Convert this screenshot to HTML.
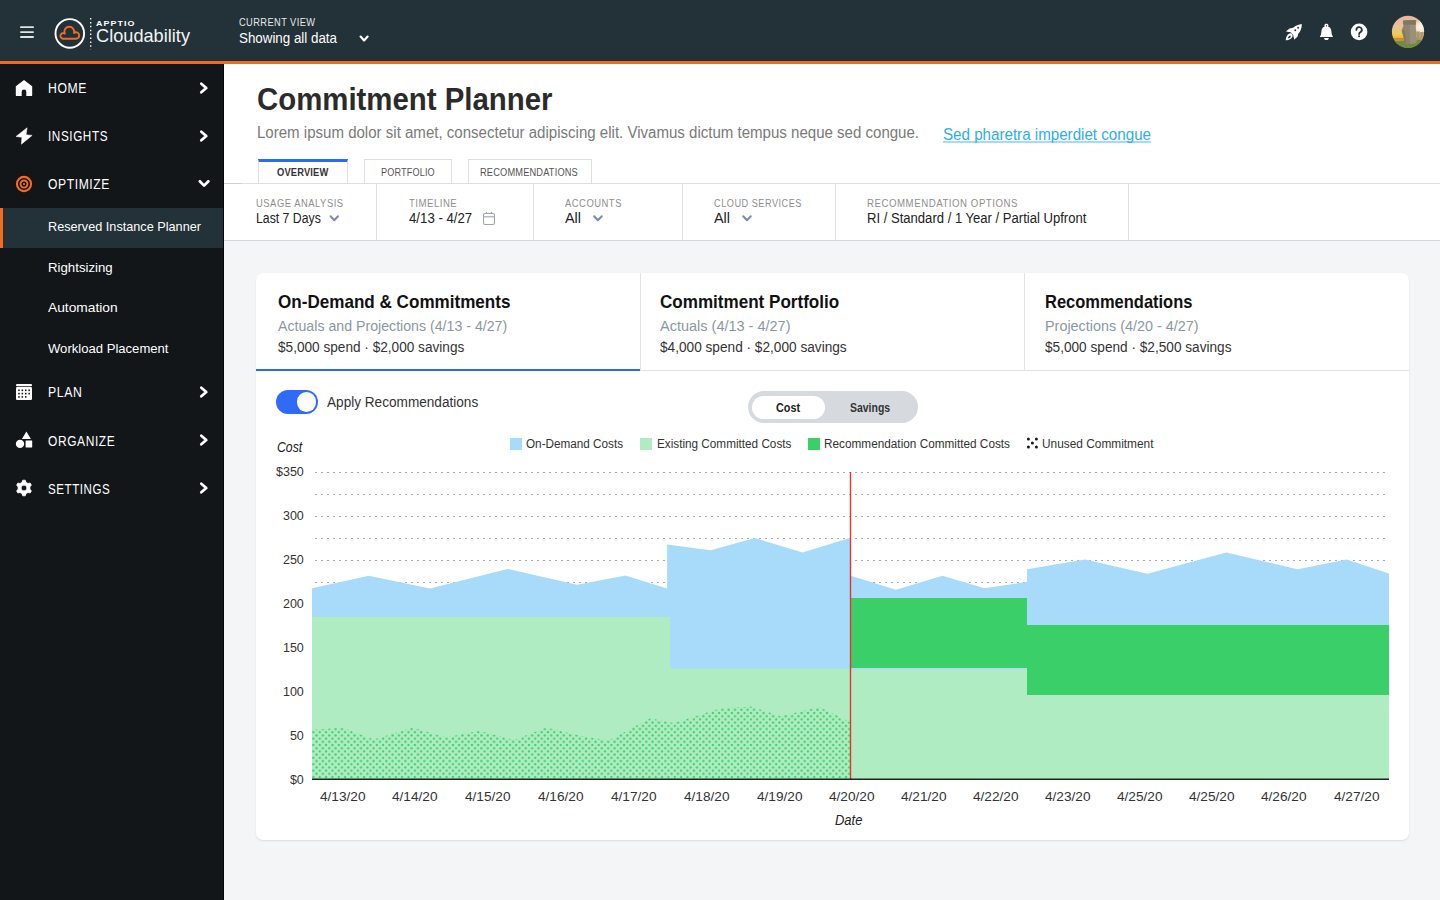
<!DOCTYPE html>
<html><head><meta charset="utf-8"><title>Commitment Planner</title>
<style>
*{box-sizing:border-box;margin:0;padding:0}
html,body{width:1440px;height:900px;overflow:hidden;background:#f4f5f7;font-family:"Liberation Sans",sans-serif;position:relative}
.abs{position:absolute}
.t{position:absolute;white-space:nowrap;line-height:1;transform-origin:0 0}
#top{position:absolute;left:0;top:0;width:1440px;height:61px;background:#233138}
#orange{position:absolute;left:0;top:61px;width:1440px;height:3px;background:#f26b21}
#side{position:absolute;left:0;top:64px;width:224px;height:836px;background:#121619}
#active{position:absolute;left:0;top:208px;width:224px;height:40px;background:#233138;border-left:3px solid #f26b21}
#hdr{position:absolute;left:224px;top:64px;width:1216px;height:177px;background:#fff;border-bottom:1px solid #d3d7db}
#fline{position:absolute;left:224px;top:183px;width:1216px;height:1px;background:#dcdfe3}
.vd{position:absolute;top:184px;width:1px;height:56px;background:#dcdfe3}
.tab{position:absolute;top:159px;height:25px;background:#fff;border:1px solid #dcdfe3;border-bottom:none}
#card{position:absolute;left:256px;top:273px;width:1153px;height:567px;background:#fff;border-radius:7px;box-shadow:0 1px 2px rgba(0,0,0,0.10)}
</style></head><body>
<div id="top"></div>
<div id="orange"></div>
<div id="side"></div>
<div id="active"></div>
<div id="hdr"></div>
<div class="tab" style="left:258px;width:90px;border-top:3px solid #2a6af5"></div>
<div class="tab" style="left:364px;width:88px"></div>
<div class="tab" style="left:468px;width:124px"></div>
<div id="fline"></div>
<div class="abs" style="left:224px;top:183px;width:18px;height:1px;background:#cdd1d5"></div>
<div class="abs" style="left:223px;top:64px;width:1px;height:836px;background:#060809"></div>
<div class="vd" style="left:376px"></div>
<div class="vd" style="left:533px"></div>
<div class="vd" style="left:682px"></div>
<div class="vd" style="left:835px"></div>
<div class="vd" style="left:1128px"></div>
<svg class="abs" style="left:0;top:0" width="1440" height="260" viewBox="0 0 1440 260">
<g fill="none" stroke="#7c8ca6" stroke-width="2" stroke-linecap="round" stroke-linejoin="round">
<polyline points="330.6,216.2 334.3,220.2 338,216.2"/>
<polyline points="594.1,216.2 597.9,220.2 601.7,216.2"/>
<polyline points="743.2,216.2 747,220.2 750.8,216.2"/>
</g>
<g fill="none" stroke="#9ea6ae" stroke-width="1.1">
<rect x="483.5" y="213.5" width="11" height="11" rx="1.5"/>
<line x1="483.5" y1="216.8" x2="494.5" y2="216.8"/>
<line x1="486.5" y1="211.8" x2="486.5" y2="214"/><line x1="491.5" y1="211.8" x2="491.5" y2="214"/>
</g>
</svg>
<div class="abs" style="left:943px;top:141.2px;width:208px;height:1.4px;background:#a3dcf6"></div>
<div id="card"></div>
<div class="abs" style="left:256px;top:370px;width:1153px;height:1px;background:#e0e3e7"></div>
<div class="abs" style="left:640px;top:273px;width:1px;height:97px;background:#e0e3e7"></div>
<div class="abs" style="left:1024px;top:273px;width:1px;height:97px;background:#e0e3e7"></div>
<div class="abs" style="left:256px;top:369px;width:384px;height:2px;background:#2a6af5"></div>
<div class="abs" style="left:276px;top:390px;width:42px;height:24px;border-radius:12px;background:#2f6bf7"></div>
<div class="abs" style="left:296.8px;top:392.2px;width:19.6px;height:19.6px;border-radius:50%;background:#fff"></div>
<div class="abs" style="left:748px;top:391px;width:170px;height:32px;border-radius:16px;background:#d6dadf"></div>
<div class="abs" style="left:752px;top:395.5px;width:73px;height:23.6px;border-radius:12px;background:#fff"></div>
<div class="abs" style="left:510px;top:438px;width:12px;height:12px;background:#a8dbf9"></div>
<div class="abs" style="left:640px;top:438px;width:12px;height:12px;background:#b0ecc2"></div>
<div class="abs" style="left:808px;top:438px;width:12px;height:12px;background:#3acf68"></div>
<svg class="abs" style="left:1026px;top:437px" width="14" height="14" viewBox="0 0 14 14"><g fill="#15191c"><circle cx="2.4" cy="2" r="1.5"/><circle cx="10.4" cy="2" r="1.5"/><circle cx="6.4" cy="6" r="1.5"/><circle cx="2.4" cy="10" r="1.5"/><circle cx="10.4" cy="10" r="1.5"/></g></svg>
<svg class="abs" style="left:0;top:0" width="1440" height="900" viewBox="0 0 1440 900">
<defs><pattern id="dots" patternUnits="userSpaceOnUse" x="313.4" y="738.6" width="6.34" height="6.4">
<rect width="6.34" height="6.4" fill="#b0ecc2"/><circle cx="0" cy="0" r="1.2" fill="#3dd06b"/><circle cx="6.34" cy="0" r="1.2" fill="#3dd06b"/><circle cx="0" cy="6.4" r="1.2" fill="#3dd06b"/><circle cx="6.34" cy="6.4" r="1.2" fill="#3dd06b"/><circle cx="3.17" cy="3.2" r="1.2" fill="#3dd06b"/></pattern></defs>
<g stroke="#a3aab5" stroke-width="1.1" stroke-dasharray="2 4" stroke-dashoffset="3" fill="none"><line x1="312" y1="472.5" x2="1389" y2="472.5"/><line x1="312" y1="494.5" x2="1389" y2="494.5"/><line x1="312" y1="516.5" x2="1389" y2="516.5"/><line x1="312" y1="538.5" x2="1389" y2="538.5"/><line x1="312" y1="560.5" x2="1389" y2="560.5"/><line x1="312" y1="582.5" x2="1389" y2="582.5"/><line x1="312" y1="604.5" x2="1389" y2="604.5"/><line x1="312" y1="626.5" x2="1389" y2="626.5"/><line x1="312" y1="648.5" x2="1389" y2="648.5"/><line x1="312" y1="670.5" x2="1389" y2="670.5"/><line x1="312" y1="692.5" x2="1389" y2="692.5"/><line x1="312" y1="714.5" x2="1389" y2="714.5"/><line x1="312" y1="736.5" x2="1389" y2="736.5"/><line x1="312" y1="758.5" x2="1389" y2="758.5"/></g>
<polygon fill="#a8dbf9" points="312.0,588.3 368.8,575.8 430.0,588.6 507.5,568.9 577.2,584.7 625.4,575.6 667.1,588.6 667.1,544.6 710.7,550.3 754.9,538.0 802.6,552.4 850.3,537.8 850.8,575.8 896.0,589.7 942.5,575.7 984.4,588.2 1027.1,582.0 1027.1,569.2 1085.0,559.4 1147.4,573.8 1226.4,552.6 1297.6,569.3 1346.5,559.4 1389.0,573.5 1389.0,779.0 312.0,779.0"/>
<polygon fill="#b0ecc2" points="312,617 670,617 670,668.6 850.5,668.6 850.5,669.4 1027,669.4 1027,695 1389,695 1389,779 312,779"/>
<polygon fill="#3acf68" points="850.5,598 1027,598 1027,625 1389,625 1389,695 1027,695 1027,668 850.5,668"/>
<polygon fill="url(#dots)" points="312.0,730.0 342.0,727.5 374.0,739.5 412.7,727.5 446.0,737.6 479.0,730.8 514.0,740.0 546.4,727.5 580.0,735.7 609.0,740.6 650.0,718.2 673.4,723.0 720.0,708.5 751.2,706.5 780.4,716.2 819.3,706.9 850.0,722.0 850.0,779.0 312.0,779.0"/>
<line x1="850.5" y1="472" x2="850.5" y2="779" stroke="#e8322f" stroke-width="1.4"/>
<line x1="312" y1="779.2" x2="1389" y2="779.2" stroke="#222" stroke-width="1.4"/>
</svg>
<svg class="abs" style="left:0;top:0" width="1440" height="61" viewBox="0 0 1440 61">
<g fill="#dfe3e6"><rect x="20" y="26.3" width="14" height="1.8" rx="0.9"/><rect x="20" y="31.2" width="14" height="1.8" rx="0.9"/><rect x="20" y="36.1" width="14" height="1.8" rx="0.9"/></g>
<circle cx="69.8" cy="33.4" r="14.3" fill="none" stroke="#fff" stroke-width="1.9"/>
<path d="M63.2,38.7 L76,38.7 A3.2,3.2 0 1 0 74.0,33.0 A4.9,4.9 0 1 0 64.84,33.64 A2.8,2.8 0 1 0 63.2,38.7 Z" fill="none" stroke="#f26b21" stroke-width="1.9" stroke-linejoin="round"/>
<line x1="90.7" y1="18" x2="90.7" y2="49.5" stroke="#fff" stroke-width="1.3" stroke-dasharray="1.5 2.4"/>
<polyline points="360.6,36.6 364.1,40.4 367.6,36.6" fill="none" stroke="#fff" stroke-width="2.2" stroke-linecap="round" stroke-linejoin="round"/>
<g fill="#fff">
<path d="M1301.8,23.9 C1298.6,24.1 1295.6,25.6 1293.2,27.7 L1289.5,28.4 L1285.9,31.6 L1290.6,32.3 L1293.1,34.8 L1294.2,39.8 L1297.6,36.5 L1298.1,34.0 C1300.6,31.4 1301.9,28.0 1301.8,23.9 Z"/>
<path fill-rule="evenodd" d="M1285.7,40.3 C1285.8,37.2 1287.0,34.4 1289.6,33.4 C1291.4,32.9 1292.9,34.2 1292.6,36.0 C1292.2,38.6 1289.2,40.2 1285.7,40.3 Z M1288.0,38.2 C1288.2,36.9 1288.9,35.9 1289.9,35.7 C1290.6,35.6 1290.9,36.2 1290.6,36.9 C1290.2,37.7 1289.2,38.2 1288.0,38.2 Z"/>
<path fill-rule="evenodd" d="M1324.4,27.2 L1324.4,25.5 C1324.4,24.3 1325.3,23.7 1326.4,23.7 C1327.5,23.7 1328.4,24.3 1328.4,25.5 L1328.4,27.2 Z M1326.0,26.4 L1326.8,26.4 L1326.8,25.1 L1326.0,25.1 Z"/>
<path d="M1323.6,26.9 L1329.2,26.9 C1330.6,27.6 1331.2,29.4 1331.4,31.5 L1331.8,34.6 L1333.0,36.9 L1319.8,36.9 L1321.0,34.6 L1321.4,31.5 C1321.6,29.4 1322.2,27.6 1323.6,26.9 Z"/>
<path d="M1323.9,37.9 L1329.0,37.9 L1328.2,39.4 C1327.8,39.9 1327.2,40.1 1326.4,40.1 C1325.6,40.1 1325.0,39.9 1324.7,39.4 Z"/>
<circle cx="1359.1" cy="31.9" r="8.3"/>
</g>
<circle cx="1295.3" cy="30.3" r="0.95" fill="#233138"/><circle cx="1298.1" cy="27.7" r="0.95" fill="#233138"/>
<path d="M1356.4,29.9 A2.7,2.7 0 1 1 1360.3,32.3 Q1359.1,32.9 1359.1,34" fill="none" stroke="#233138" stroke-width="1.8" stroke-linecap="round"/>
<circle cx="1359.1" cy="36.3" r="1.05" fill="#233138"/>
<defs><linearGradient id="sky" x1="0" y1="0" x2="0" y2="1"><stop offset="0" stop-color="#e6b39b"/><stop offset="0.35" stop-color="#ecc49a"/><stop offset="0.58" stop-color="#f0c850"/><stop offset="0.66" stop-color="#eeb62c"/><stop offset="0.68" stop-color="#c98a3e"/><stop offset="0.8" stop-color="#d09a48"/><stop offset="0.84" stop-color="#8c9a45"/><stop offset="1" stop-color="#6d8a30"/></linearGradient>
<radialGradient id="glow" cx="0.5" cy="0.5" r="0.5"><stop offset="0" stop-color="#fffaf2"/><stop offset="0.6" stop-color="#fbeee0" stop-opacity="0.8"/><stop offset="1" stop-color="#f3dcc4" stop-opacity="0"/></radialGradient>
<clipPath id="av"><circle cx="1408" cy="31.8" r="16.1"/></clipPath></defs>
<g clip-path="url(#av)">
<rect x="1390" y="14" width="36" height="36" fill="url(#sky)"/>
<ellipse cx="1421" cy="27" rx="8" ry="8" fill="url(#glow)"/>
<path d="M1389,41.5 L1400,41 L1416,40.5 L1426,38.5 L1426,50 L1389,50 Z" fill="#728c3c"/>
<rect x="1416.3" y="31.5" width="3.4" height="8.5" fill="#a69678"/>
<rect x="1420.2" y="32" width="3.4" height="8" fill="#b09a78"/>
<path d="M1403.2,20.6 L1415.6,20 L1416,24.5 L1415.4,25 L1416.4,43 L1410.5,44 L1404.5,43.4 L1403.8,38 L1401.6,30.5 L1403.6,25.3 L1402.8,23.5 Z" fill="#8d8570"/>
<path d="M1403.2,20.6 L1415.6,20 L1416,24.5 L1403.5,24.8 Z" fill="#7d7a62"/>
<path d="M1409.5,25 L1415.4,25 L1416.4,43 L1410.5,44 Z" fill="#9a9078"/>
<path d="M1402,31 L1405,30 L1406,42 L1404.5,43.4 L1403.8,38 Z" fill="#807a66"/>
</g>
</svg>
<svg class="abs" style="left:0;top:0" width="224" height="520" viewBox="0 0 224 520">
<path fill="#fff" d="M24,80.1 L32.2,86.2 L32.2,95.2 Q32.2,96.1 31.2,96.1 L26.3,96.1 L26.3,91.7 A2.3,2.3 0 0 0 21.7,91.7 L21.7,96.1 L16.8,96.1 Q15.8,96.1 15.8,95.2 L15.8,86.2 Z"/>
<polyline points="201.3,83.7 206.3,88 201.3,92.3" fill="none" stroke="#fff" stroke-width="2.7" stroke-linecap="round" stroke-linejoin="round"/>
<path fill="#fff" d="M27.1,127.8 L16,136.5 L21.9,137.3 L21.4,144.2 L32.1,135.4 L26.1,134.7 Z" stroke="#fff" stroke-width="0.5" stroke-linejoin="round"/>
<polyline points="201.3,131.7 206.3,136 201.3,140.3" fill="none" stroke="#fff" stroke-width="2.7" stroke-linecap="round" stroke-linejoin="round"/>
<circle cx="24" cy="184" r="7.1" fill="none" stroke="#f26b21" stroke-width="2.1"/>
<circle cx="24" cy="184" r="3.5" fill="none" stroke="#f26b21" stroke-width="1.9"/>
<circle cx="24" cy="184" r="1.1" fill="#f26b21"/>
<polyline points="199.8,181.2 204.1,185.6 208.4,181.2" fill="none" stroke="#fff" stroke-width="2.7" stroke-linecap="round" stroke-linejoin="round"/>
<rect x="16" y="384" width="16" height="2.2" rx="1" fill="#fff"/>
<rect x="16" y="387" width="16" height="13" rx="1.2" fill="#fff"/>
<g fill="#121619"><rect x="18.2" y="389.5" width="1.5" height="1.6"/><rect x="21.6" y="389.5" width="1.5" height="1.6"/><rect x="25.0" y="389.5" width="1.5" height="1.6"/><rect x="28.4" y="389.5" width="1.5" height="1.6"/><rect x="18.2" y="392.8" width="1.5" height="1.6"/><rect x="21.6" y="392.8" width="1.5" height="1.6"/><rect x="25.0" y="392.8" width="1.5" height="1.6"/><rect x="28.4" y="392.8" width="1.5" height="1.6"/><rect x="18.2" y="396.1" width="1.5" height="1.6"/><rect x="21.6" y="396.1" width="1.5" height="1.6"/><rect x="25.0" y="396.1" width="1.5" height="1.6"/></g>
<polyline points="201.3,387.7 206.3,392 201.3,396.3" fill="none" stroke="#fff" stroke-width="2.7" stroke-linecap="round" stroke-linejoin="round"/>
<polygon fill="#fff" points="26.4,431.6 30.9,439 21.9,439"/>
<circle cx="20" cy="443.9" r="4.15" fill="#fff"/>
<rect x="25.6" y="440.6" width="6.6" height="6.8" rx="0.3" fill="#fff"/>
<polyline points="201.3,435.7 206.3,440 201.3,444.3" fill="none" stroke="#fff" stroke-width="2.7" stroke-linecap="round" stroke-linejoin="round"/>
<path fill="#fff" fill-rule="evenodd" d="M25.32,495.79 L22.68,495.79 L22.15,493.71 L19.99,492.46 L17.91,493.04 L16.60,490.75 L18.13,489.25 L18.13,486.75 L16.60,485.25 L17.91,482.96 L19.99,483.54 L22.15,482.29 L22.68,480.21 L25.32,480.21 L25.85,482.29 L28.01,483.54 L30.09,482.96 L31.40,485.25 L29.87,486.75 L29.87,489.25 L31.40,490.75 L30.09,493.04 L28.01,492.46 L25.85,493.71 Z M26.90,488.00 A2.9,2.9 0 1 0 21.10,488.00 A2.9,2.9 0 1 0 26.90,488.00 Z" stroke="#fff" stroke-width="0.8" stroke-linejoin="round"/>
<polyline points="201.3,483.7 206.3,488 201.3,492.3" fill="none" stroke="#fff" stroke-width="2.7" stroke-linecap="round" stroke-linejoin="round"/>
</svg>
<div class="t" style="left:239.00px;top:17.02px;font-size:10.8px;color:#e6e9eb;letter-spacing:0.500px;transform:scaleX(0.8569);">CURRENT VIEW</div>
<div class="t" style="left:96.20px;top:20.59px;font-size:6.6px;color:#ffffff;font-weight:700;letter-spacing:0.800px;transform:scaleX(1.3481);">APPTIO</div>
<div class="t" style="left:239.00px;top:31.30px;font-size:14px;color:#ffffff;transform:scaleX(0.9538);">Showing all data</div>
<div class="t" style="left:96.00px;top:27.38px;font-size:18.5px;color:#f2f4f5;transform:scaleX(0.9828);">Cloudability</div>
<div class="t" style="left:48.00px;top:81.30px;font-size:14px;color:#ffffff;letter-spacing:0.700px;transform:scaleX(0.8728);">HOME</div>
<div class="t" style="left:48.00px;top:129.00px;font-size:14px;color:#ffffff;letter-spacing:0.700px;transform:scaleX(0.8378);">INSIGHTS</div>
<div class="t" style="left:48.00px;top:177.00px;font-size:14px;color:#ffffff;letter-spacing:0.700px;transform:scaleX(0.8646);">OPTIMIZE</div>
<div class="t" style="left:48.00px;top:385.30px;font-size:14px;color:#ffffff;letter-spacing:0.700px;transform:scaleX(0.8739);">PLAN</div>
<div class="t" style="left:48.00px;top:433.70px;font-size:14px;color:#ffffff;letter-spacing:0.700px;transform:scaleX(0.8549);">ORGANIZE</div>
<div class="t" style="left:48.00px;top:481.60px;font-size:14px;color:#ffffff;letter-spacing:0.700px;transform:scaleX(0.8250);">SETTINGS</div>
<div class="t" style="left:48.00px;top:220.12px;font-size:13.5px;color:#ffffff;transform:scaleX(0.9396);">Reserved Instance Planner</div>
<div class="t" style="left:48.00px;top:260.72px;font-size:13.5px;color:#ffffff;transform:scaleX(0.9798);">Rightsizing</div>
<div class="t" style="left:48.00px;top:300.92px;font-size:13.5px;color:#ffffff;transform:scaleX(1.0191);">Automation</div>
<div class="t" style="left:48.00px;top:341.52px;font-size:13.5px;color:#ffffff;transform:scaleX(0.9693);">Workload Placement</div>
<div class="t" style="left:256.70px;top:84.05px;font-size:31px;color:#2b2b2b;font-weight:700;transform:scaleX(0.9478);">Commitment Planner</div>
<div class="t" style="left:257.30px;top:125.00px;font-size:16px;color:#7a7a7a;transform:scaleX(0.9403);">Lorem ipsum dolor sit amet, consectetur adipiscing elit. Vivamus dictum tempus neque sed congue.</div>
<div class="t" style="left:943.00px;top:127.00px;font-size:16px;color:#2eaee8;transform:scaleX(0.9467);">Sed pharetra imperdiet congue</div>
<div class="t" style="left:277.20px;top:167.18px;font-size:11.2px;color:#333333;font-weight:700;letter-spacing:0.200px;transform:scaleX(0.8341);">OVERVIEW</div>
<div class="t" style="left:380.50px;top:167.18px;font-size:11.2px;color:#555555;letter-spacing:0.200px;transform:scaleX(0.8130);">PORTFOLIO</div>
<div class="t" style="left:480.40px;top:167.18px;font-size:11.2px;color:#555555;letter-spacing:0.200px;transform:scaleX(0.8274);">RECOMMENDATIONS</div>
<div class="t" style="left:256.20px;top:198.12px;font-size:10.8px;color:#8e8e8e;letter-spacing:0.600px;transform:scaleX(0.8708);">USAGE ANALYSIS</div>
<div class="t" style="left:409.00px;top:198.12px;font-size:10.8px;color:#8e8e8e;letter-spacing:0.600px;transform:scaleX(0.8834);">TIMELINE</div>
<div class="t" style="left:565.20px;top:198.12px;font-size:10.8px;color:#8e8e8e;letter-spacing:0.600px;transform:scaleX(0.8705);">ACCOUNTS</div>
<div class="t" style="left:714.00px;top:198.12px;font-size:10.8px;color:#8e8e8e;letter-spacing:0.600px;transform:scaleX(0.8494);">CLOUD SERVICES</div>
<div class="t" style="left:866.80px;top:198.12px;font-size:10.8px;color:#8e8e8e;letter-spacing:0.600px;transform:scaleX(0.8939);">RECOMMENDATION OPTIONS</div>
<div class="t" style="left:256.20px;top:211.20px;font-size:14px;color:#222222;transform:scaleX(0.8764);">Last 7 Days</div>
<div class="t" style="left:409.00px;top:211.20px;font-size:14px;color:#222222;transform:scaleX(0.9442);">4/13 - 4/27</div>
<div class="t" style="left:565.20px;top:211.20px;font-size:14px;color:#222222;transform:scaleX(1.0281);">All</div>
<div class="t" style="left:714.00px;top:211.20px;font-size:14px;color:#222222;transform:scaleX(1.0281);">All</div>
<div class="t" style="left:866.80px;top:211.20px;font-size:14px;color:#222222;transform:scaleX(0.9335);">RI / Standard / 1 Year / Partial Upfront</div>
<div class="t" style="left:277.50px;top:293.07px;font-size:18.5px;color:#111111;font-weight:700;transform:scaleX(0.9232);">On-Demand &amp; Commitments</div>
<div class="t" style="left:277.50px;top:319.30px;font-size:14px;color:#8c97a1;transform:scaleX(1.0121);">Actuals and Projections (4/13 - 4/27)</div>
<div class="t" style="left:277.50px;top:340.20px;font-size:14px;color:#333333;transform:scaleX(0.9729);">$5,000 spend · $2,000 savings</div>
<div class="t" style="left:660.00px;top:293.07px;font-size:18.5px;color:#111111;font-weight:700;transform:scaleX(0.9225);">Commitment Portfolio</div>
<div class="t" style="left:660.00px;top:319.30px;font-size:14px;color:#8c97a1;transform:scaleX(1.0352);">Actuals (4/13 - 4/27)</div>
<div class="t" style="left:660.00px;top:340.20px;font-size:14px;color:#333333;transform:scaleX(0.9750);">$4,000 spend · $2,000 savings</div>
<div class="t" style="left:1044.60px;top:293.07px;font-size:18.5px;color:#111111;font-weight:700;transform:scaleX(0.8906);">Recommendations</div>
<div class="t" style="left:1044.60px;top:319.30px;font-size:14px;color:#8c97a1;transform:scaleX(1.0274);">Projections (4/20 - 4/27)</div>
<div class="t" style="left:1044.60px;top:340.20px;font-size:14px;color:#333333;transform:scaleX(0.9740);">$5,000 spend · $2,500 savings</div>
<div class="t" style="left:326.80px;top:395.30px;font-size:14px;color:#333333;transform:scaleX(0.9715);">Apply Recommendations</div>
<div class="t" style="left:776.40px;top:401.35px;font-size:13px;color:#222222;font-weight:700;transform:scaleX(0.8307);">Cost</div>
<div class="t" style="left:849.60px;top:401.35px;font-size:13px;color:#333333;font-weight:700;transform:scaleX(0.8043);">Savings</div>
<div class="t" style="left:526.20px;top:437.57px;font-size:12.5px;color:#333333;transform:scaleX(0.9380);">On-Demand Costs</div>
<div class="t" style="left:656.70px;top:437.57px;font-size:12.5px;color:#333333;transform:scaleX(0.9391);">Existing Committed Costs</div>
<div class="t" style="left:824.00px;top:437.57px;font-size:12.5px;color:#333333;transform:scaleX(0.9427);">Recommendation Committed Costs</div>
<div class="t" style="left:1042.20px;top:437.57px;font-size:12.5px;color:#333333;transform:scaleX(0.9497);">Unused Commitment</div>
<div class="t" style="left:276.60px;top:440.00px;font-size:14px;color:#222222;font-style:italic;transform:scaleX(0.8751);">Cost</div>
<div class="t" style="left:834.80px;top:812.90px;font-size:14px;color:#222222;font-style:italic;transform:scaleX(0.9264);">Date</div>
<div class="t" style="left:275.99px;top:465.57px;font-size:12.5px;color:#333333;">$350</div>
<div class="t" style="left:282.94px;top:509.57px;font-size:12.5px;color:#333333;">300</div>
<div class="t" style="left:282.94px;top:553.57px;font-size:12.5px;color:#333333;">250</div>
<div class="t" style="left:282.94px;top:597.57px;font-size:12.5px;color:#333333;">200</div>
<div class="t" style="left:282.94px;top:641.57px;font-size:12.5px;color:#333333;">150</div>
<div class="t" style="left:282.94px;top:685.57px;font-size:12.5px;color:#333333;">100</div>
<div class="t" style="left:289.89px;top:729.57px;font-size:12.5px;color:#333333;">50</div>
<div class="t" style="left:289.89px;top:773.57px;font-size:12.5px;color:#333333;">$0</div>
<div class="t" style="left:320.10px;top:790.77px;font-size:12.5px;color:#333333;transform:scaleX(1.0906);">4/13/20</div>
<div class="t" style="left:391.90px;top:790.77px;font-size:12.5px;color:#333333;transform:scaleX(1.0906);">4/14/20</div>
<div class="t" style="left:464.90px;top:790.77px;font-size:12.5px;color:#333333;transform:scaleX(1.0906);">4/15/20</div>
<div class="t" style="left:538.00px;top:790.77px;font-size:12.5px;color:#333333;transform:scaleX(1.0906);">4/16/20</div>
<div class="t" style="left:611.00px;top:790.77px;font-size:12.5px;color:#333333;transform:scaleX(1.0906);">4/17/20</div>
<div class="t" style="left:684.20px;top:790.77px;font-size:12.5px;color:#333333;transform:scaleX(1.0906);">4/18/20</div>
<div class="t" style="left:757.30px;top:790.77px;font-size:12.5px;color:#333333;transform:scaleX(1.0906);">4/19/20</div>
<div class="t" style="left:829.10px;top:790.77px;font-size:12.5px;color:#333333;transform:scaleX(1.0906);">4/20/20</div>
<div class="t" style="left:901.40px;top:790.77px;font-size:12.5px;color:#333333;transform:scaleX(1.0906);">4/21/20</div>
<div class="t" style="left:973.20px;top:790.77px;font-size:12.5px;color:#333333;transform:scaleX(1.0906);">4/22/20</div>
<div class="t" style="left:1045.00px;top:790.77px;font-size:12.5px;color:#333333;transform:scaleX(1.0906);">4/23/20</div>
<div class="t" style="left:1117.30px;top:790.77px;font-size:12.5px;color:#333333;transform:scaleX(1.0906);">4/25/20</div>
<div class="t" style="left:1189.30px;top:790.77px;font-size:12.5px;color:#333333;transform:scaleX(1.0906);">4/25/20</div>
<div class="t" style="left:1261.30px;top:790.77px;font-size:12.5px;color:#333333;transform:scaleX(1.0906);">4/26/20</div>
<div class="t" style="left:1333.70px;top:790.77px;font-size:12.5px;color:#333333;transform:scaleX(1.0906);">4/27/20</div>
</body></html>
